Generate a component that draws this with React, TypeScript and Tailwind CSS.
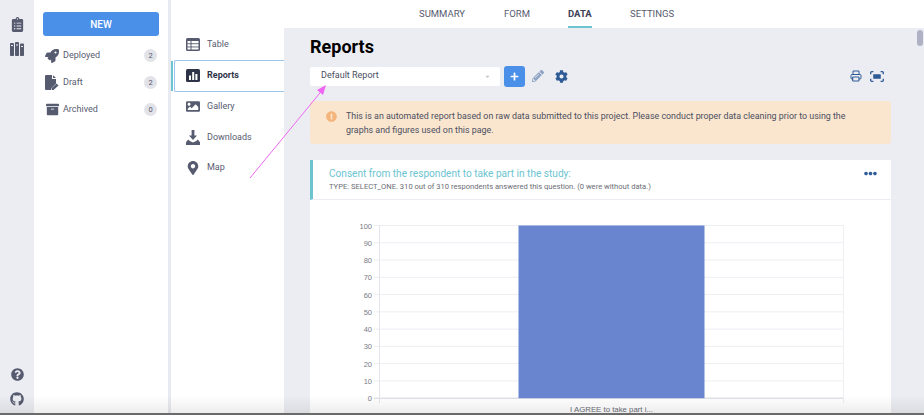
import { FaClipboardList, FaRocket, FaImage, FaMapMarkerAlt, FaQuestionCircle, FaGithub, FaPencilAlt, FaCog, FaEllipsisH, FaPlus, FaArchive, FaExclamationCircle, FaCaretDown } from 'react-icons/fa';
import { FiPrinter } from 'react-icons/fi';

const BooksIcon = () => (
  <svg width="14" height="14" viewBox="0 0 14 14" fill="#575b70">
    <rect x="0" y="1" width="4" height="13" rx="0.8" />
    <rect x="5" y="0" width="4" height="14" rx="0.8" />
    <rect x="10" y="1.5" width="4" height="12.5" rx="0.8" />
    <rect x="1" y="3" width="2" height="1" fill="#ecedf2" />
    <rect x="6" y="2.5" width="2" height="1" fill="#ecedf2" />
    <rect x="11" y="4" width="2" height="1" fill="#ecedf2" />
  </svg>
);

const DraftIcon = () => (
  <svg width="14" height="15" viewBox="0 0 14 15" fill="#575b70">
    <path d="M1 0h6v4h4v4.500L6.500 13 6 15H1a1 1 0 0 1-1-1V1a1 1 0 0 1 1-1z" />
    <path d="M8 .2 11 3H8z" />
    <path d="M11.500 8.500 13.500 10.500 8.500 15H6.800V13z" />
  </svg>
);

const TableIcon = () => (
  <svg width="14" height="13" viewBox="0 0 14 13">
    <rect width="14" height="13" rx="1.500" fill="#575b70" />
    <rect x="1.500" y="3" width="3" height="2.300" fill="#fff" />
    <rect x="5.500" y="3" width="7" height="2.300" fill="#fff" />
    <rect x="1.500" y="6.200" width="3" height="2.300" fill="#fff" />
    <rect x="5.500" y="6.200" width="7" height="2.300" fill="#fff" />
    <rect x="1.500" y="9.400" width="3" height="2.100" fill="#fff" />
    <rect x="5.500" y="9.400" width="7" height="2.100" fill="#fff" />
  </svg>
);

const ReportsIcon = () => (
  <svg width="14" height="14" viewBox="0 0 14 14">
    <rect width="14" height="13" rx="1.500" fill="#2f3348" />
    <rect x="3" y="6.500" width="2" height="4.500" fill="#fff" />
    <rect x="6.200" y="3" width="2" height="8" fill="#fff" />
    <rect x="9.400" y="5" width="2" height="6" fill="#fff" />
  </svg>
);

const DownloadIcon = () => (
  <svg width="14" height="15" viewBox="0 0 14 15" fill="#575b70">
    <path d="M5.600 0h2.800v5.500H11L7 10 3 5.500h2.600z" />
    <path d="M0 12.200 2.200 9.500l1.600 1.600L7 12.400l3.200-1.300 1.600-1.600L14 12.200V15H0z" />
  </svg>
);

const ExpandIcon = () => (
  <svg width="14" height="11" viewBox="0 0 14 11" fill="none" stroke="#2e5a96" strokeWidth="1.300">
    <path d="M.7 3.200V1.800A1 1 0 0 1 1.800.7h1.600M10.600.7h1.600a1 1 0 0 1 1.100 1.100v1.400M13.300 7.800v1.400a1 1 0 0 1-1.100 1.100h-1.600M3.400 10.300H1.800A1 1 0 0 1 .7 9.200V7.800" />
    <rect x="3.200" y="3.200" width="7.600" height="4.600" rx="0.600" fill="#2e5a96" stroke="none" />
  </svg>
);

const drawerItems = [
  { label: 'Deployed', count: 2, icon: <FaRocket size={14} /> },
  { label: 'Draft', count: 2, icon: <DraftIcon /> },
  { label: 'Archived', count: 0, icon: <FaArchive size={13} /> },
];

const subItems = [
  { label: 'Table', icon: <TableIcon /> },
  { label: 'Reports', icon: <ReportsIcon />, active: true },
  { label: 'Gallery', icon: <FaImage size={15} /> },
  { label: 'Downloads', icon: <DownloadIcon /> },
  { label: 'Map', icon: <FaMapMarkerAlt size={14} /> },
];

const ticks = [100, 90, 80, 70, 60, 50, 40, 30, 20, 10, 0];

const Chart = () => (
  <svg width="582" height="215" viewBox="0 0 582 215" className="block">
    {ticks.map((t, i) => {
      const y = 25.5 + i * 17.27;
      return (
        <g key={t}>
          <line x1="64" x2="534" y1={y} y2={y} stroke={t === 0 ? '#d4d6dc' : '#eceef2'} />
          <text x="62" y={y + 3} textAnchor="end" fontSize="7.500" fill="#7a7c85" fontFamily="Liberation Sans, sans-serif">{t}</text>
        </g>
      );
    })}
    <line x1="69.500" x2="69.500" y1="25" y2="203" stroke="#e4e5ea" />
    <line x1="533.500" x2="533.500" y1="25" y2="203" stroke="#eeeff2" />
    <rect x="208.500" y="25.500" width="186" height="172.700" fill="#6985d0" />
    <text x="301.500" y="212" textAnchor="middle" fontSize="7.800" fill="#6b6d76" fontFamily="Liberation Sans, sans-serif">I AGREE to take part i...</text>
  </svg>
);

export default function App() {
  return (
    <div className="relative flex h-[415px] w-[924px] overflow-hidden bg-[#ecedf2] font-['Roboto',sans-serif] text-[#575b70]">
      {/* icon rail */}
      <aside className="flex w-[34px] shrink-0 flex-col items-center justify-between pt-[17px] pb-[9px]">
        <div className="flex flex-col items-center gap-[10px]">
          <FaClipboardList size={15} color="#575b70" />
          <BooksIcon />
        </div>
        <div className="flex flex-col items-center gap-[11px]">
          <FaQuestionCircle size={13} color="#575b70" />
          <FaGithub size={14} color="#575b70" />
        </div>
      </aside>

      {/* project drawer */}
      <aside className="w-[134px] shrink-0 bg-white pt-[12px]">
        <button className="ml-[9px] flex h-[24px] w-[116px] items-center justify-center rounded-[3px] bg-[#4a90e8] text-[10px] font-medium text-white">
          NEW
        </button>
        <div className="mt-[6px] flex flex-col">
          {drawerItems.map((item) => (
            <div key={item.label} className="flex h-[27px] items-center pl-[10px] pr-[11px]">
              <span className="flex w-[16px] justify-center">{item.icon}</span>
              <span className="ml-[3px] flex-1 text-[9px]">{item.label}</span>
              <span className="flex h-[13px] w-[13px] items-center justify-center rounded-full bg-[#e2e3e8] text-[7.500px]">{item.count}</span>
            </div>
          ))}
        </div>
      </aside>
      <div className="w-[3px] shrink-0 bg-[#e9eaef]" />

      <div className="flex min-w-0 flex-1 flex-col">
        {/* top tabs */}
        <header className="relative flex h-[28px] shrink-0 items-center bg-white text-[9.500px]">
          <span className="absolute left-[248px]">SUMMARY</span>
          <span className="absolute left-[333px]">FORM</span>
          <span className="absolute left-[397px] font-bold text-[#3d4056]">DATA</span>
          <span className="absolute left-[459px]">SETTINGS</span>
          <span className="absolute bottom-0 left-[397px] h-[2px] w-[24px] bg-[#6cc4d0]" />
        </header>

        <div className="flex min-h-0 flex-1">
          {/* data sub nav */}
          <nav className="w-[113px] shrink-0 bg-white pt-[1px]">
            {subItems.map((item) => (
              <div
                key={item.label}
                className={
                  item.active
                    ? 'relative ml-[3px] flex h-[32px] items-center rounded-l-[2px] border border-r-0 border-[#9ac6ee] pl-[11px] text-[#2f3348]'
                    : 'flex h-[30.500px] items-center pl-[15px]'
                }
              >
                {item.active && <span className="absolute left-[-4px] top-0 bottom-0 w-[2px] bg-[#6cc4d0]" />}
                <span className="flex w-[14px] justify-center">{item.icon}</span>
                <span className={item.active ? 'ml-[7px] text-[9px] font-bold' : 'ml-[7px] text-[9px]'}>{item.label}</span>
              </div>
            ))}
          </nav>

          {/* main */}
          <main className="min-w-0 flex-1 pl-[26px] pt-[7px]">
            <div className="w-[581px]">
              <h1 className="text-[18px] leading-[24px] font-bold text-black">Reports</h1>
              <div className="mt-[7px] flex h-[20px] items-center">
                <div className="flex h-[19px] w-[190px] items-center justify-between rounded-[2px] bg-white pl-[11px] pr-[9px] text-[9px] text-[#4b4e5e]">
                  <span>Default Report</span>
                  <FaCaretDown size={7} color="#c3c5cd" />
                </div>
                <button className="ml-[4px] flex h-[21px] w-[21px] items-center justify-center rounded-[3px] bg-[#4a90e8] text-white">
                  <FaPlus size={9} />
                </button>
                <span className="ml-[7px]"><FaPencilAlt size={12} color="#8fa3c4" /></span>
                <span className="ml-[11px]"><FaCog size={13} color="#2e5a96" /></span>
                <span className="ml-auto"><FiPrinter size={12} color="#2e5a96" /></span>
                <span className="ml-[8px] mr-[7px] flex"><ExpandIcon /></span>
              </div>
              <div className="mt-[15px] flex h-[43px] rounded-[3px] bg-[#fae6cf] pl-[16px] pr-[30px] pt-[8px] text-[8.900px] leading-[14px] text-[#4b4e5e]">
                <span className="mt-[2px] shrink-0"><FaExclamationCircle size={11} color="#f4b47c" /></span>
                <p className="ml-[9px]">This is an automated report based on raw data submitted to this project. Please conduct proper data cleaning prior to using the graphs and figures used on this page.</p>
              </div>
              <section className="mt-[16px] bg-white">
                <div className="relative h-[40px] border-b border-[#ecedf2] border-l-[3px] border-l-[#6cc4d0] pl-[16px] pt-[7px]">
                  <h2 className="text-[10.100px] leading-[14px] text-[#6cc4d0]">Consent from the respondent to take part in the study:</h2>
                  <p className="mt-[1px] text-[7.600px] leading-[10px] text-[#6b6d76]">TYPE: SELECT_ONE. 310 out of 310 respondents answered this question. (0 were without data.)</p>
                  <span className="absolute right-[14px] top-[7px]"><FaEllipsisH size={13} color="#2e5a96" /></span>
                </div>
                <Chart />
              </section>
            </div>
          </main>
        </div>
      </div>

      {/* scrollbar thumb */}
      <span className="absolute left-[917px] top-[30px] h-[16px] w-[6px] rounded-[3px] bg-[#aeb2c4]" />

      {/* annotation arrow */}
      <svg className="absolute left-[245px] top-[80px]" width="90" height="102" viewBox="0 0 90 102" fill="none">
        <path d="M5 98 79 8" stroke="#ee66f2" strokeWidth="1" />
        <path d="M81 5 72 10 78 15z" fill="#ee66f2" />
      </svg>

      {/* bottom window edge */}
      <div className="pointer-events-none absolute inset-x-0 bottom-0 h-[20px] bg-gradient-to-b from-transparent to-[#00000014]" />
      <div className="absolute inset-x-0 bottom-0 h-[2px] bg-[#6b6b6b]" />
    </div>
  );
}
